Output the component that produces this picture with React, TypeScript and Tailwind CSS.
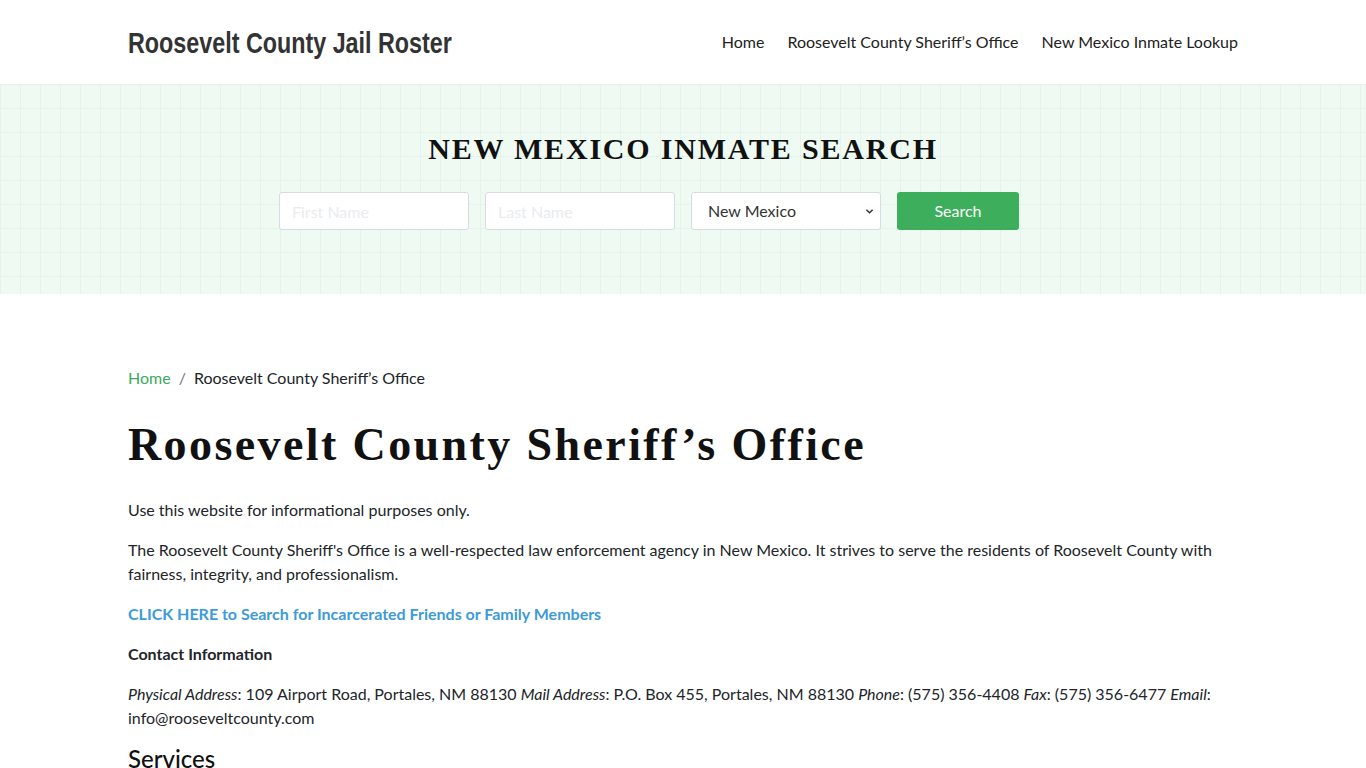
import React from "react";

export default function App() {
  return (
    <div className="min-h-screen bg-white text-[#212529] font-['Lato','Noto_Sans',sans-serif]">
      <header className="h-[84px] bg-white">
        <div className="mx-auto flex h-full w-[1110px] items-center justify-between">
          <a className="inline-block origin-left scale-x-[0.777] whitespace-nowrap font-['Liberation_Sans','Arial',sans-serif] text-[30px] font-bold leading-[36px] text-[#333333] translate-y-[1px]">
            Roosevelt County Jail Roster
          </a>
          <nav className="flex items-center gap-[23px] text-[16px] text-[#222222]">
            <a>Home</a>
            <a>Roosevelt County Sheriff’s Office</a>
            <a>New Mexico Inmate Lookup</a>
          </nav>
        </div>
      </header>

      <section className="h-[210px] bg-[#eefaf2] bg-[linear-gradient(to_right,#e5f3ea_1px,transparent_1px),linear-gradient(to_bottom,#e5f3ea_1px,transparent_1px)] bg-[size:20px_24px]">
        <div className="mx-auto w-[1110px] pt-[48px]">
          <h2 className="text-center font-['Liberation_Serif','DejaVu_Serif',serif] text-[30px] font-bold uppercase leading-[34px] tracking-[1.8px] text-[#111111]">
            New Mexico Inmate Search
          </h2>
          <div className="mt-[26px] ml-[151px] flex gap-[16px]">
            <input
              className="h-[38px] w-[190px] rounded-[3px] border border-[#d6dde2] bg-white px-[12px] text-[16px] placeholder:text-[#e9ecef] outline-none"
              placeholder="First Name"
            />
            <input
              className="h-[38px] w-[190px] rounded-[3px] border border-[#d6dde2] bg-white px-[12px] text-[16px] placeholder:text-[#e9ecef] outline-none"
              placeholder="Last Name"
            />
            <div className="relative h-[38px] w-[190px] rounded-[3px] border border-[#d6dde2] bg-white">
              <span className="absolute left-[16px] top-[8px] text-[16px] leading-[20px] text-[#333]">New Mexico</span>
              <svg className="absolute right-[6px] top-[14px]" width="9" height="9" viewBox="0 0 10 10">
                <path d="M1.5 3 L5 6.5 L8.5 3" fill="none" stroke="#333" strokeWidth="1.6" />
              </svg>
            </div>
            <button className="h-[38px] w-[122px] rounded-[3px] bg-[#3cae5c] text-[16px] text-white">Search</button>
          </div>
        </div>
      </section>

      <main className="mx-auto w-[1110px] pt-[72px]">
        <div className="flex items-center text-[16px] leading-[24px]">
          <a className="text-[#3aaa5c]">Home</a>
          <span className="px-[8px] text-[#6c757d]">/</span>
          <span className="text-[#212529]">Roosevelt County Sheriff’s Office</span>
        </div>
        <h1 className="mt-[28px] font-['Liberation_Serif','DejaVu_Serif',serif] text-[46px] font-bold leading-[54px] tracking-[2.4px] text-[#111111]">
          Roosevelt County Sheriff’s Office
        </h1>
        <div className="mt-[26px] text-[16px] leading-[24px] text-[#212529]">
          <p>Use this website for informational purposes only.</p>
          <p className="mt-[16px] pr-[10px]">
            The Roosevelt County Sheriff's Office is a well-respected law enforcement agency in New Mexico. It strives to serve the residents of Roosevelt County with fairness, integrity, and professionalism.
          </p>
          <p className="mt-[16px]">
            <a className="font-bold text-[#3d9bd7]">CLICK HERE to Search for Incarcerated Friends or Family Members</a>
          </p>
          <p className="mt-[16px] font-bold">Contact Information</p>
          <p className="mt-[16px]">
            <em>Physical Address</em>: 109 Airport Road, Portales, NM 88130 <em>Mail Address</em>: P.O. Box 455, Portales, NM 88130 <em>Phone</em>: (575) 356-4408 <em>Fax</em>: (575) 356-6477 <em>Email</em>: info@rooseveltcounty.com
          </p>
          <h2 className="mt-[14px] text-[24px] font-medium leading-[30px] text-[#111]">Services</h2>
        </div>
      </main>
    </div>
  );
}
